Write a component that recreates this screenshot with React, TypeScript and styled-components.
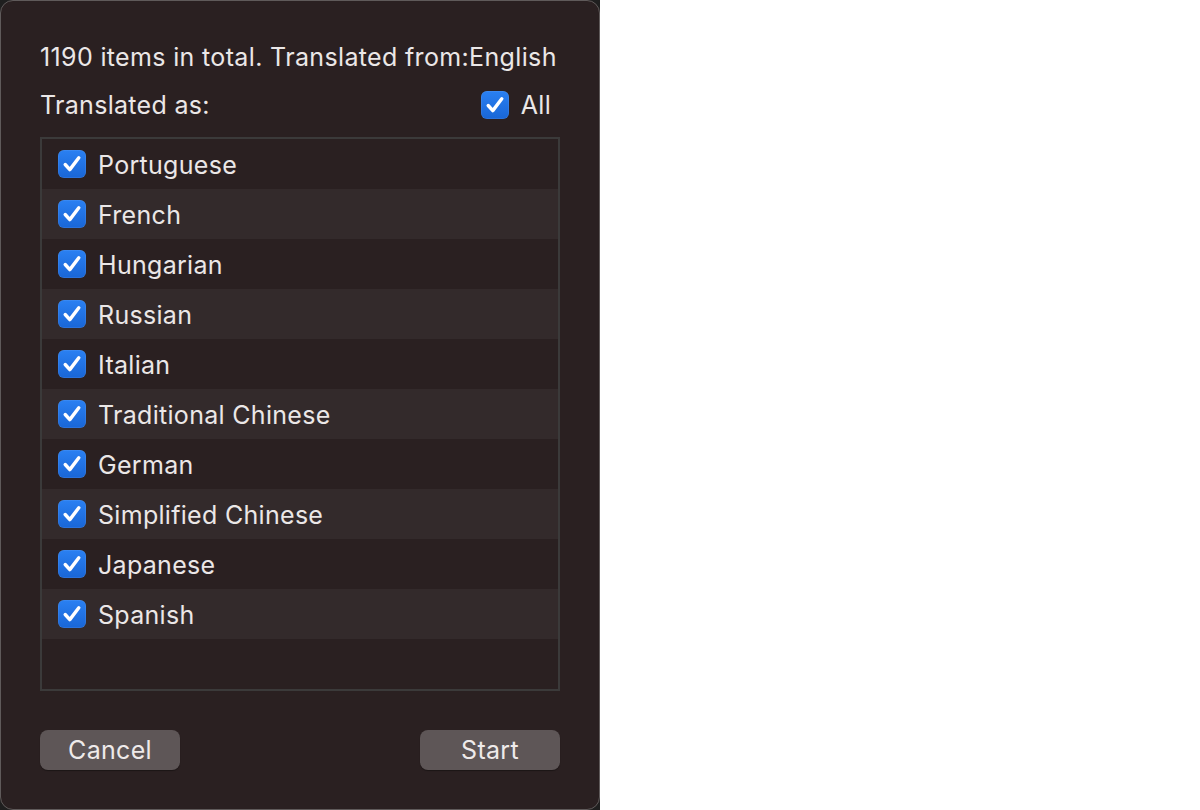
import React, { useState } from "react";
import styled, { createGlobalStyle } from "styled-components";

const Global = createGlobalStyle`
  html, body { margin: 0; padding: 0; background: #ffffff; }
  * { box-sizing: border-box; }
`;

const Backdrop = styled.div`
  width: 600px;
  height: 810px;
  background: #1f1f1f;
`;

const Window = styled.div`
  width: 600px;
  height: 810px;
  background: #2a2021;
  border: 1px solid #5f5a5a;
  border-radius: 13px;
  padding: 39px 39px 39px 39px;
  display: flex;
  flex-direction: column;
  font-family: Inter, "Liberation Sans", sans-serif;
  color: #ebe7e7;
`;

const Title = styled.div`
  font-size: 25px;
  line-height: 34px;
  height: 34px;
  letter-spacing: 0.35px;
  white-space: nowrap;
`;

const HeaderRow = styled.div`
  margin-top: 15px;
  display: flex;
  align-items: center;
  justify-content: space-between;
  height: 32px;
  font-size: 25px;
  letter-spacing: 0.3px;
`;

const AllLabel = styled.label`
  display: flex;
  align-items: center;
  gap: 12px;
  padding-right: 9px;
`;

const Box = styled.span<{ $checked: boolean }>`
  width: 28px;
  height: 28px;
  border-radius: 6px;
  flex: none;
  display: flex;
  align-items: center;
  justify-content: center;
  background: ${(p) => (p.$checked ? "linear-gradient(#2a80f2, #1966d6)" : "#3a3334")};
  box-shadow: inset 0 0 0 0.5px rgba(255,255,255,0.15);
`;

const List = styled.div`
  margin-top: 16px;
  height: 554px;
  border: 2px solid #3b3a3a;
  display: flex;
  flex-direction: column;
`;

const Row = styled.label<{ $alt: boolean }>`
  height: 50px;
  flex: none;
  display: flex;
  align-items: center;
  gap: 12px;
  padding-left: 16px;
  background: ${(p) => (p.$alt ? "#332a2b" : "transparent")};
  font-size: 25px;
  letter-spacing: 0.3px;
  cursor: default;
`;

const RowText = styled.span`
  padding-top: 2px;
`;

const Footer = styled.div`
  margin-top: auto;
  display: flex;
  justify-content: space-between;
`;

const Button = styled.button`
  width: 140px;
  height: 40px;
  border: none;
  border-radius: 8px;
  background: #5e5657;
  color: #eeeaea;
  font-family: Inter, "Liberation Sans", sans-serif;
  font-size: 25px;
  letter-spacing: 0.3px;
  box-shadow: 0 1px 1px rgba(0,0,0,0.35);
  padding: 0;
`;

const Check = () => (
  <svg width="20" height="20" viewBox="0 0 20 20">
    <path d="M3.2 10.5 L7.8 15.6 L16.8 3.8" fill="none" stroke="#ffffff" strokeWidth="3.4" strokeLinecap="round" strokeLinejoin="round" />
  </svg>
);

const languages = [
  "Portuguese",
  "French",
  "Hungarian",
  "Russian",
  "Italian",
  "Traditional Chinese",
  "German",
  "Simplified Chinese",
  "Japanese",
  "Spanish",
];

export default function App() {
  const [checked] = useState(languages.map(() => true));
  return (
    <>
      <Global />
      <Backdrop>
        <Window>
          <Title>1190 items in total. Translated from:English</Title>
          <HeaderRow>
            <span>Translated as:</span>
            <AllLabel>
              <Box $checked><Check /></Box>
              <span>All</span>
            </AllLabel>
          </HeaderRow>
          <List>
            {languages.map((l, i) => (
              <Row key={l} $alt={i % 2 === 1}>
                <Box $checked={checked[i]}>{checked[i] && <Check />}</Box>
                <RowText>{l}</RowText>
              </Row>
            ))}
          </List>
          <Footer>
            <Button>Cancel</Button>
            <Button>Start</Button>
          </Footer>
        </Window>
      </Backdrop>
    </>
  );
}
